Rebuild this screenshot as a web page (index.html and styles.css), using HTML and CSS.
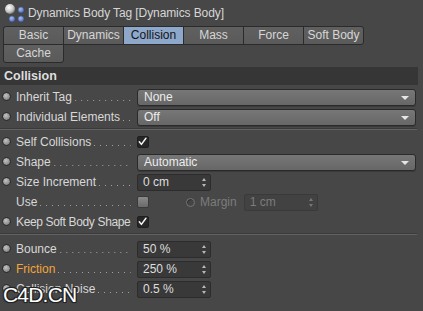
FILE: index.html
```html
<!DOCTYPE html>
<html>
<head>
<meta charset="utf-8">
<link rel="stylesheet" href="styles.css">
</head>
<body>
<div class="panel">
  <div class="titlebar">
    <svg class="ticon" width="24" height="24" viewBox="0 0 24 24">
      <defs>
        <radialGradient id="sph" cx="0.4" cy="0.35" r="0.7">
          <stop offset="0" stop-color="#ffffff"/>
          <stop offset="0.6" stop-color="#c8c8c8"/>
          <stop offset="1" stop-color="#707070"/>
        </radialGradient>
        <radialGradient id="blu" cx="0.4" cy="0.35" r="0.7">
          <stop offset="0" stop-color="#a9bdf0"/>
          <stop offset="1" stop-color="#4b63a8"/>
        </radialGradient>
      </defs>
      <circle cx="8" cy="9" r="5" fill="url(#sph)"/>
      <circle cx="19" cy="10" r="3.2" fill="url(#blu)" stroke="#2e3c66" stroke-width="0.6"/>
      <circle cx="10" cy="19" r="3.2" fill="url(#blu)" stroke="#2e3c66" stroke-width="0.6"/>
      <circle cx="19" cy="19" r="3.2" fill="url(#blu)" stroke="#2e3c66" stroke-width="0.6"/>
    </svg>
    <span class="ttext">Dynamics Body Tag [Dynamics Body]</span>
  </div>

  <div class="tabs">
    <div class="tabrow">
      <div class="tab first">Basic</div>
      <div class="tab">Dynamics</div>
      <div class="tab active">Collision</div>
      <div class="tab">Mass</div>
      <div class="tab">Force</div>
      <div class="tab last">Soft Body</div>
    </div>
    <div class="tabrow second">
      <div class="tab single">Cache</div>
    </div>
  </div>

  <div class="header">Collision</div>

  <div class="group g1">
    <div class="row">
      <div class="lab"><span class="radio"></span><span class="txt">Inherit Tag</span><span class="dots"></span></div>
      <div class="select"><span>None</span><i class="arrow"></i></div>
    </div>
    <div class="row">
      <div class="lab"><span class="radio"></span><span class="txt">Individual Elements</span><span class="dots"></span></div>
      <div class="select"><span>Off</span><i class="arrow"></i></div>
    </div>
  </div>
  <div class="sep"></div>

  <div class="group g2">
    <div class="row">
      <div class="lab"><span class="radio"></span><span class="txt">Self Collisions</span><span class="dots"></span></div>
      <div class="check on"><svg width="11" height="11" viewBox="0 0 11 11"><path d="M2.3 5.8 L4.4 8.4 L8.9 2.2" fill="none" stroke="#f2f2f2" stroke-width="1.5" stroke-linecap="round" stroke-linejoin="round"/></svg></div>
    </div>
    <div class="row">
      <div class="lab"><span class="radio"></span><span class="txt">Shape</span><span class="dots"></span></div>
      <div class="select"><span>Automatic</span><i class="arrow"></i></div>
    </div>
    <div class="row">
      <div class="lab"><span class="radio"></span><span class="txt">Size Increment</span><span class="dots"></span></div>
      <div class="num"><span>0 cm</span><i class="spin"></i></div>
    </div>
    <div class="row">
      <div class="lab"><span class="radio blank"></span><span class="txt">Use</span><span class="dots"></span></div>
      <div class="check off"></div>
      <div class="margin">
        <span class="radio dim"></span><span class="mtxt">Margin</span>
        <div class="num disabled"><span>1 cm</span><i class="spin"></i></div>
      </div>
    </div>
    <div class="row">
      <div class="lab"><span class="radio"></span><span class="txt tight">Keep Soft Body Shape</span></div>
      <div class="check on"><svg width="11" height="11" viewBox="0 0 11 11"><path d="M2.3 5.8 L4.4 8.4 L8.9 2.2" fill="none" stroke="#f2f2f2" stroke-width="1.5" stroke-linecap="round" stroke-linejoin="round"/></svg></div>
    </div>
  </div>
  <div class="sep"></div>

  <div class="group g3">
    <div class="row">
      <div class="lab"><span class="radio"></span><span class="txt">Bounce</span><span class="dots"></span></div>
      <div class="num"><span>50 %</span><i class="spin"></i></div>
    </div>
    <div class="row">
      <div class="lab"><span class="radio"></span><span class="txt orange">Friction</span><span class="dots"></span></div>
      <div class="num"><span>250 %</span><i class="spin"></i></div>
    </div>
    <div class="row">
      <div class="lab"><span class="radio"></span><span class="txt">Collision Noise</span><span class="dots"></span></div>
      <div class="num"><span>0.5 %</span><i class="spin"></i></div>
    </div>
  </div>

  <div class="watermark">C4D.CN</div>
</div>
</body>
</html>
```

FILE: styles.css
```css
html, body {
  margin: 0;
  padding: 0;
}
body {
  background: #474747;
  width: 423px;
  height: 311px;
  overflow: hidden;
  font-family: "Liberation Sans", Arial, sans-serif;
  font-size: 12px;
  color: #d4d4d4;
}
.panel {
  position: relative;
  width: 423px;
  height: 311px;
}
.titlebar {
  height: 25px;
  display: flex;
  align-items: center;
  padding-left: 2px;
}
.ticon {
  display: block;
  margin-top: -1px;
}
.ttext {
  margin-left: 2px;
  color: #d6d6d6;
  font-size: 12px;
  letter-spacing: -0.1px;
}
.tabs {
  padding-left: 3px;
  padding-top: 1px;
}
.tabrow {
  display: flex;
}
.tabrow.second {
  margin-top: -1px;
}
.tab {
  box-sizing: border-box;
  width: 61px;
  height: 19px;
  margin-left: -1px;
  border: 1px solid #2b2b2b;
  background: linear-gradient(#606060, #5a5a5a);
  color: #d6d6d6;
  text-align: center;
  line-height: 17px;
}
.tab.first {
  margin-left: 0;
  border-top-left-radius: 3px;
}
.tab.last {
  border-top-right-radius: 3px;
  border-bottom-right-radius: 3px;
}
.tab.single {
  margin-left: 0;
  border-bottom-left-radius: 3px;
  border-bottom-right-radius: 3px;
}
.tab.active {
  background: #8ea8cb;
  color: #141414;
}
.header {
  margin-top: 4px;
  width: 418px;
  height: 18px;
  background: #363636;
  box-sizing: border-box;
  padding-left: 4px;
  line-height: 18px;
  font-weight: bold;
  color: #dedede;
  font-size: 12.5px;
}
.group {
  display: flex;
  flex-direction: column;
}
.g1 {
  padding-top: 2px;
  padding-bottom: 1px;
}
.g2 {
  padding-top: 2px;
  padding-bottom: 1px;
}
.g3 {
  padding-top: 4px;
}
.sep {
  width: 417px;
  height: 0;
  border-top: 1px solid #3a3a3a;
  border-bottom: 1px solid #626262;
}
.row {
  height: 20px;
  display: flex;
  align-items: center;
}
.lab {
  width: 133px;
  flex: none;
  display: flex;
  align-items: baseline;
  line-height: 14px;
  margin-right: 4px;
}
.radio {
  flex: none;
  box-sizing: border-box;
  width: 9px;
  height: 9px;
  margin-left: 2px;
  border-radius: 50%;
  background: radial-gradient(circle at 40% 35%, #c2c2c2, #858585 75%);
  border: 1px solid #2a2a2a;
  position: relative;
  top: 0;
}
.radio.blank {
  visibility: hidden;
}
.txt {
  margin-left: 5px;
  white-space: nowrap;
  color: #d8d8d8;
}
.txt.tight {
  letter-spacing: -0.35px;
}
.txt.orange {
  color: #f2a53a;
}
.dots {
  flex: 1;
  height: 1px;
  margin-left: 3px;
  margin-right: 2px;
  background-image: repeating-linear-gradient(to right, #a0a0a0 0 1px, transparent 1px 6px);
  background-position: right 0;
}
.select {
  box-sizing: border-box;
  width: 279px;
  height: 17px;
  border: 1px solid #2a2a2a;
  border-radius: 3px;
  background: linear-gradient(#777777, #676767);
  display: flex;
  align-items: center;
  justify-content: space-between;
  padding: 0 6px 0 6px;
  color: #ececec;
  box-shadow: 0 1px 0 #3a3a3a;
}
.arrow {
  width: 0;
  height: 0;
  border-left: 4px solid transparent;
  border-right: 4px solid transparent;
  border-top: 4px solid #e6e6e6;
  margin-top: 1px;
}
.num {
  box-sizing: border-box;
  width: 74px;
  height: 17px;
  border: 1px solid #2c2c2c;
  border-radius: 2px;
  background: #393939;
  display: flex;
  align-items: center;
  justify-content: space-between;
  padding: 0 3px 0 5px;
  color: #dedede;
}
.spin {
  width: 5px;
  height: 9px;
  position: relative;
}
.spin::before, .spin::after {
  content: "";
  position: absolute;
  left: 0;
  width: 0;
  height: 0;
  border-left: 2.5px solid transparent;
  border-right: 2.5px solid transparent;
}
.spin::before {
  top: 0;
  border-bottom: 3.5px solid #b8b8b8;
}
.spin::after {
  bottom: 0;
  border-top: 3.5px solid #b8b8b8;
}
.num.disabled {
  background: #424242;
  border-color: #3a3a3a;
  color: #7c7c7c;
}
.num.disabled .spin::before {
  border-bottom-color: #777;
}
.num.disabled .spin::after {
  border-top-color: #777;
}
.check {
  box-sizing: border-box;
  width: 12px;
  height: 12px;
  border-radius: 2px;
}
.check svg {
  display: block;
}
.check.on {
  background: #262626;
  border: 1px solid #1e1e1e;
}
.check.on svg {
  margin: -1px 0 0 -1px;
}
.check.off {
  background: linear-gradient(#8a8a8a, #6a6a6a);
  border: 1px solid #3a3a3a;
}
.margin {
  display: flex;
  align-items: center;
  margin-left: 37px;
}
.radio.dim {
  margin-left: 0;
  background: #454545;
  border: 1px solid #767676;
  box-shadow: inset 1px 1px 0 #2f2f2f;
}
.mtxt {
  margin-left: 5px;
  color: #7c7c7c;
  margin-right: 7px;
}
.watermark {
  position: absolute;
  left: 3px;
  top: 283px;
  font-family: "Liberation Sans", Arial, sans-serif;
  font-size: 21px;
  letter-spacing: -0.8px;
  color: #ffffff;
  text-shadow: 1px 1px 0 #222, -1px -1px 0 #222, 1px -1px 0 #222, -1px 1px 0 #222, 0 0 2px #000;
}
```
